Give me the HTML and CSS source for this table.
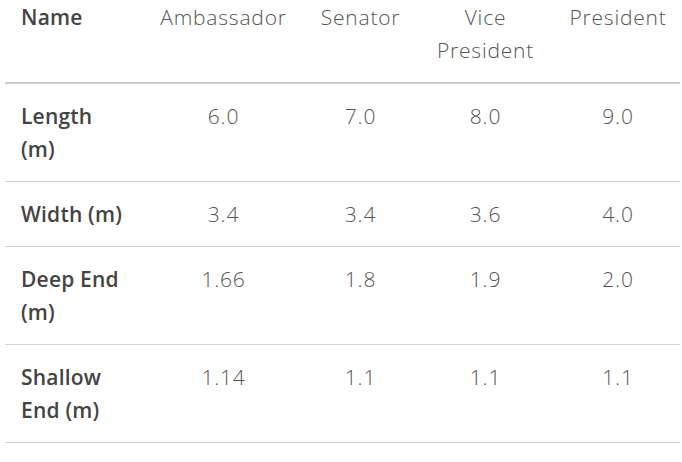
FILE: index.html
```html
<!DOCTYPE html>
<html>
<head>
<meta charset="utf-8">
<link rel="stylesheet" href="styles.css">
</head>
<body>
<table class="specs">
  <colgroup>
    <col class="c-name"><col class="c-amb"><col class="c-sen"><col class="c-vp"><col class="c-pres">
  </colgroup>
  <thead>
    <tr><th class="label">Name</th><th>Ambassador</th><th>Senator</th><th>Vice President</th><th class="last">President</th></tr>
  </thead>
  <tbody>
    <tr><th class="label">Length (m)</th><td>6.0</td><td>7.0</td><td>8.0</td><td class="last">9.0</td></tr>
    <tr><th class="label">Width (m)</th><td>3.4</td><td>3.4</td><td>3.6</td><td class="last">4.0</td></tr>
    <tr><th class="label">Deep End (m)</th><td>1.66</td><td>1.8</td><td>1.9</td><td class="last">2.0</td></tr>
    <tr><th class="label">Shallow End (m)</th><td>1.14</td><td>1.1</td><td>1.1</td><td class="last">1.1</td></tr>
  </tbody>
</table>
</body>
</html>
```
FILE: styles.css
```css
html, body {
  margin: 0;
  padding: 0;
  background: #fff;
}
.specs {
  margin-left: 5px;
  width: 675px;
  table-layout: fixed;
  border-collapse: collapse;
  font-family: "Open Sans", "Lato", sans-serif;
  font-size: 21px;
  line-height: 33px;
  color: #555;
}
.c-name { width: 144px; }
.c-amb { width: 149px; }
.c-sen { width: 125px; }
.c-vp { width: 125px; }
.c-pres { width: 132px; }
.specs th, .specs td {
  padding: 16px 0 15px;
  text-align: center;
  vertical-align: top;
  font-weight: 300;
  letter-spacing: 0.8px;
}
.specs .last { padding-left: 8px; }
.specs thead th {
  padding-top: 1px;
  border-bottom: 2px solid #cccccc;
}
.specs tbody tr {
  border-bottom: 1px solid #d2d2d2;
}
.specs .label {
  padding-left: 16px;
  padding-right: 22px;
  text-align: left;
  font-weight: 600;
  letter-spacing: 0.2px;
  color: #444;
}
```
